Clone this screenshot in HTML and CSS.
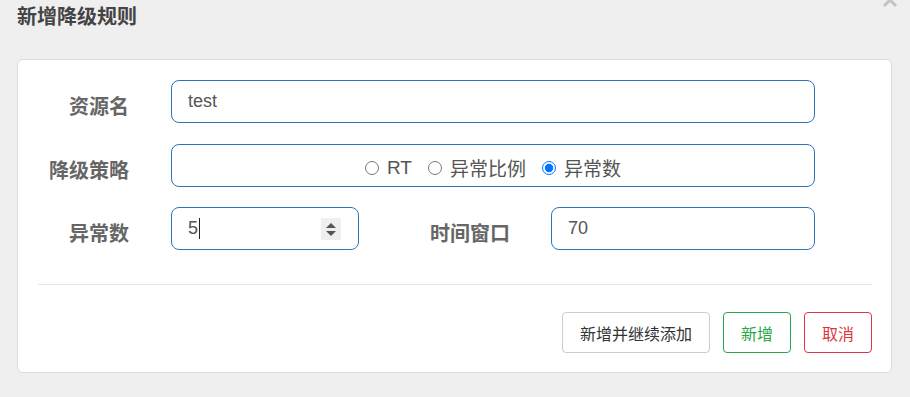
FILE: index.html
```html
<!DOCTYPE html>
<html lang="zh-CN">

<head>
    <meta charset="UTF-8">
    <meta name="viewport" content="width=device-width, initial-scale=1.0">
    <title>新增降级规则</title>
    <link rel="stylesheet" href="styles.css">
</head>

<body>
    <div class="modal-header">
        <h4 class="modal-title">新增降级规则</h4>
        <span class="close-btn">
            <svg width="16" height="16" viewBox="0 0 16 16">
                <path d="M2 2 L14 14 M14 2 L2 14" stroke="#c4c4c4" stroke-width="3" fill="none" />
            </svg>
        </span>
    </div>
    <div class="modal-body">
        <div class="form-row">
            <label class="form-label">资源名</label>
            <input class="form-input wide" type="text" value="test">
        </div>
        <div class="form-row">
            <label class="form-label">降级策略</label>
            <div class="form-input wide radio-group">
                <label class="radio-item"><input type="radio" name="grade">RT</label>
                <label class="radio-item"><input type="radio" name="grade">异常比例</label>
                <label class="radio-item"><input type="radio" name="grade" checked>异常数</label>
            </div>
        </div>
        <div class="form-row">
            <label class="form-label">异常数</label>
            <div class="form-input small number-input">
                <span>5</span><span class="caret"></span>
                <span class="spinner">
                    <span class="up"></span>
                    <span class="down"></span>
                </span>
            </div>
            <label class="form-label window-label">时间窗口</label>
            <input class="form-input medium" type="text" value="70">
        </div>
        <div class="divider"></div>
        <div class="modal-footer">
            <button class="btn btn-default">新增并继续添加</button>
            <button class="btn btn-success">新增</button>
            <button class="btn btn-danger">取消</button>
        </div>
    </div>
</body>

</html>
```

FILE: styles.css
```css
* {
    box-sizing: border-box;
    margin: 0;
    padding: 0;
}

body {
    font-family: "Liberation Sans", "Noto Sans CJK SC", sans-serif;
    background-color: #efefef;
    padding: 0 18px 0 17px;
    position: relative;
}

.modal-header {
    height: 34px;
    margin-bottom: 25px;
}

.modal-title {
    font-size: 20px;
    line-height: 34px;
    font-weight: bold;
    color: #444;
}

.close-btn {
    position: absolute;
    top: -8px;
    right: 12px;
}

.modal-body {
    background: white;
    border: 1px solid #dcdcdc;
    border-radius: 6px;
    padding: 20px 19px 19px 20px;
}

.form-row {
    display: flex;
    align-items: center;
    height: 43px;
    margin-bottom: 21px;
}

.form-row:nth-child(2) {
    margin-bottom: 20px;
}

.form-row:nth-child(3) {
    margin-bottom: 34px;
}

.form-label {
    width: 91px;
    margin-right: 42px;
    text-align: right;
    font-size: 20px;
    font-weight: bold;
    color: #666;
    padding-top: 7px;
}

.window-label {
    width: 151px;
    margin-right: 41px;
}

.form-input {
    height: 43px;
    border: 1px solid #2f74b8;
    border-radius: 8px;
    padding-left: 16px;
    font-family: "Liberation Sans", "Noto Sans CJK SC", sans-serif;
    font-size: 18px;
    color: #555;
    background: white;
    outline: none;
}

.wide {
    width: 644px;
}

.small {
    width: 188px;
}

.medium {
    width: 264px;
}

.radio-group {
    display: flex;
    justify-content: center;
    align-items: center;
    gap: 16px;
    padding: 4px 0 0 0;
    font-size: 19px;
}

.radio-item {
    display: flex;
    align-items: center;
    color: #555;
}

.radio-item input {
    width: 14px;
    height: 14px;
    margin: 0 8px 0 0;
}

.number-input {
    position: relative;
    display: flex;
    align-items: center;
}

.caret {
    display: inline-block;
    width: 1px;
    height: 21px;
    background: #222;
    margin-left: 1px;
}

.spinner {
    position: absolute;
    right: 17px;
    top: 10px;
    width: 20px;
    height: 22px;
    background: #efefef;
    display: flex;
    flex-direction: column;
    align-items: center;
    justify-content: center;
    gap: 3px;
}

.spinner .up {
    border-left: 5px solid transparent;
    border-right: 5px solid transparent;
    border-bottom: 5px solid #555;
}

.spinner .down {
    border-left: 5px solid transparent;
    border-right: 5px solid transparent;
    border-top: 5px solid #555;
}

.divider {
    height: 1px;
    background: #e5e5e5;
    margin-bottom: 27px;
}

.modal-footer {
    display: flex;
    justify-content: flex-end;
    gap: 13px;
}

.btn {
    height: 41px;
    padding: 0 17px;
    background: white;
    border: 1px solid #ccc;
    border-radius: 4px;
    font-family: "Liberation Sans", "Noto Sans CJK SC", sans-serif;
    font-size: 16px;
    color: #333;
    cursor: pointer;
}

.btn-success {
    border-color: #28a745;
    color: #28a745;
}

.btn-danger {
    border-color: #dc3545;
    color: #dc3545;
}
```
